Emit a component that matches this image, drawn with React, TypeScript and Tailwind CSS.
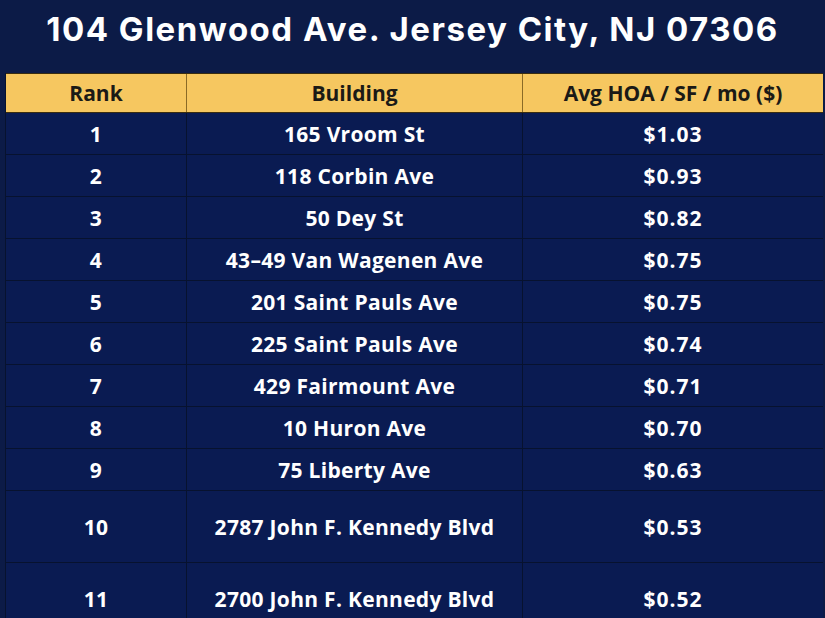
const rows = [
  { rank: "1", building: "165 Vroom St", hoa: "$1.03" },
  { rank: "2", building: "118 Corbin Ave", hoa: "$0.93" },
  { rank: "3", building: "50 Dey St", hoa: "$0.82" },
  { rank: "4", building: "43\u201349 Van Wagenen Ave", hoa: "$0.75" },
  { rank: "5", building: "201 Saint Pauls Ave", hoa: "$0.75" },
  { rank: "6", building: "225 Saint Pauls Ave", hoa: "$0.74" },
  { rank: "7", building: "429 Fairmount Ave", hoa: "$0.71" },
  { rank: "8", building: "10 Huron Ave", hoa: "$0.70" },
  { rank: "9", building: "75 Liberty Ave", hoa: "$0.63" },
  { rank: "10", building: "2787 John F. Kennedy Blvd", hoa: "$0.53", tall: true },
  { rank: "11", building: "2700 John F. Kennedy Blvd", hoa: "$0.52", tall: true },
];

export default function App() {
  return (
    <div className="w-[825px] h-[618px] overflow-hidden bg-[#0c1b47] font-['Open_Sans',sans-serif]">
      <h1 className="h-[73px] pb-[14px] flex items-center justify-center text-white text-[33px] font-bold tracking-[1.5px] font-['Inter',sans-serif]">
        104 Glenwood Ave. Jersey City, NJ 07306
      </h1>

      <div className="ml-[5px] w-[818px] border-l border-[#07122f]">
        {/* header */}
        <div className="grid grid-cols-[180px_336px_1fr] h-[40px] bg-[#f6c760] text-[#1b1a16] text-[21px] font-bold border-y border-[#3a2d10]">
          <div className="flex items-center justify-center pt-[1px]">Rank</div>
          <div className="flex items-center justify-center pt-[1px] border-l border-[#8a6a26]">Building</div>
          <div className="flex items-center justify-center pt-[1px] border-l border-[#8a6a26]">Avg HOA / SF / mo ($)</div>
        </div>

        {rows.map((r) => (
          <div
            key={r.rank}
            className={`grid grid-cols-[180px_336px_1fr] bg-[#0a1b52] text-white text-[21px] font-bold tracking-[0.3px] border-b border-[#07122f] ${
              r.tall ? "h-[72px]" : "h-[42px]"
            }`}
          >
            <div className="flex items-center justify-center pt-[2px]">{r.rank}</div>
            <div className="flex items-center justify-center pt-[2px] border-l border-[#07122f]">{r.building}</div>
            <div className="flex items-center justify-center pt-[2px] border-l border-[#07122f] tracking-[1px]">{r.hoa}</div>
          </div>
        ))}
      </div>
    </div>
  );
}
